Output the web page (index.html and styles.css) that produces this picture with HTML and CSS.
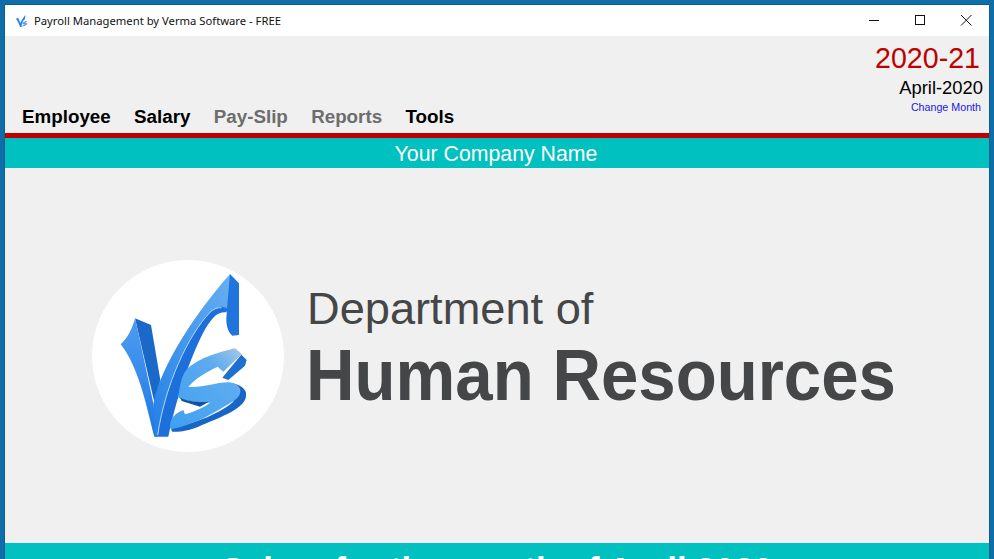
FILE: index.html
```html
<!DOCTYPE html>
<html lang="en">
<head>
<meta charset="utf-8">
<title>Payroll Management by Verma Software - FREE</title>
<link rel="stylesheet" href="styles.css">
</head>
<body>
<div class="window">
  <div class="titlebar">
    <svg class="app-icon" viewBox="0 0 14 14" aria-hidden="true">
      <path d="M1 5 L3 3.5 L5.5 9 C6.5 6 8.5 3 10.5 1 L10 5 C8 6.5 7 9 6.5 13 L5 13 C4 10 3 7 1 5 Z" fill="#2f7fe0"/>
      <path d="M7.5 9 C9 7.5 11 7 12.5 7 L10.5 8.7 L12.5 9.6 C11.5 11.5 9.5 12.5 7 12.5 L8 11 L10 10.2 L7.5 10 Z" fill="#5aa6f0"/>
    </svg>
    <span class="app-title">Payroll Management by Verma Software - FREE</span>
    <div class="win-controls">
      <svg class="win-btn" viewBox="0 0 46 31" aria-hidden="true"><path d="M18 15.5 H28" stroke="#111" fill="none"/></svg>
      <svg class="win-btn" viewBox="0 0 46 31" aria-hidden="true"><rect x="18.5" y="10.5" width="9" height="9" stroke="#111" fill="none"/></svg>
      <svg class="win-btn" viewBox="0 0 46 31" aria-hidden="true"><path d="M18 10 L28.5 20.5 M28.5 10 L18 20.5" stroke="#111" fill="none"/></svg>
    </div>
  </div>
  <header class="header">
    <nav class="menu">
      <span class="menu-item">Employee</span>
      <span class="menu-item">Salary</span>
      <span class="menu-item disabled">Pay-Slip</span>
      <span class="menu-item disabled">Reports</span>
      <span class="menu-item">Tools</span>
    </nav>
    <div class="period">
      <div class="year">2020-21</div>
      <div class="month">April-2020</div>
      <div class="change">Change Month</div>
    </div>
  </header>
  <div class="company">Your Company Name</div>
  <main class="main">
    <div class="hero">
      <svg class="logo" viewBox="21 15 576 576" role="img" aria-label="VS logo">
        <defs>
          <linearGradient id="face" x1="0" y1="0" x2="0" y2="1">
            <stop offset="0" stop-color="#4d9df0"/>
            <stop offset="1" stop-color="#1f78e4"/>
          </linearGradient>
          <linearGradient id="arm" x1="1" y1="0" x2="0" y2="1">
            <stop offset="0" stop-color="#66aff2"/>
            <stop offset=".6" stop-color="#3f93ea"/>
            <stop offset="1" stop-color="#2480e6"/>
          </linearGradient>
          <linearGradient id="sface" x1="1" y1="0" x2="0" y2="1">
            <stop offset="0" stop-color="#a9c7e6"/>
            <stop offset=".3" stop-color="#5cabf0"/>
            <stop offset="1" stop-color="#40a0f0"/>
          </linearGradient>
        </defs>
        <circle cx="309" cy="303" r="288" fill="#fff"/>
        <path d="M435 57 L462 85 L462 240 L442 242 C428 230 420 205 426 170 L395 156 Z" fill="#1f74dd"/>
        <path d="M150 190 L198 210 L226 375 L210 450 Z" fill="#1a68c8"/>
        <path d="M107 268 C128 250 142 220 150 190 L158 225 L205 445 L218 545 L208 545 C190 480 165 340 107 268 Z" fill="url(#face)"/>
        <path d="M205 450 C215 370 300 210 435 57 L426 160 C410 150 392 155 375 172 C310 240 240 390 218 545 L210 545 Z" fill="url(#arm)"/>
        <path d="M218 545 C240 390 310 240 375 172 C392 155 412 152 426 172 C400 168 385 185 368 210 C335 262 280 400 250 545 Z" fill="#1d70dc"/>
        <path d="M218 540 C240 390 310 240 375 172 C385 162 398 157 410 158" stroke="#a6d4fa" stroke-width="3" fill="none"/>
        <path d="M450 280 L485 315 L480 332 L430 375 L412 368 L468 300 Z" fill="#1f6fd0"/>
        <path d="M445 385 C475 395 488 405 482 430 C470 465 400 490 340 515 C310 527 280 532 262 530 L255 515 C330 510 410 470 445 440 Z" fill="#1765c4"/>
        <path d="M300 350 C330 312 400 292 450 280 L470 298 L415 350 L398 335 C365 350 330 372 310 395 C350 402 420 372 445 385 C478 398 470 425 440 442 C390 472 330 510 258 523 C250 500 262 478 295 465 L300 478 C330 470 360 455 375 443 C345 442 305 440 280 428 C282 400 290 365 300 350 Z" fill="url(#sface)"/>
        <path d="M285 428 C310 440 345 442 372 440 L345 455 L290 438 Z" fill="#12539f"/>
      </svg>
      <div class="hero-text">
        <div class="dept">Department of</div>
        <div class="hr">Human Resources</div>
      </div>
    </div>
  </main>
  <div class="salary-bar">Salary for the month of April 2020</div>
</div>
</body>
</html>
```
FILE: styles.css
```css
* { box-sizing: border-box; }
html, body { margin: 0; height: 100%; overflow: hidden; }
body {
  background: #0f6ea8;
  padding: 5px 5px 0;
  font-family: "Liberation Sans", Arial, sans-serif;
}
.window {
  height: 554px;
  display: flex;
  flex-direction: column;
  overflow: hidden;
  background: #f0f0f0;
  box-shadow: 0 0 0 1px #0d5f90;
}
.titlebar {
  flex: 0 0 31px;
  display: flex;
  align-items: center;
  background: #fff;
  padding-left: 10px;
}
.app-icon { width: 14px; height: 14px; margin-right: 5px; }
.app-title {
  font-family: "Noto Sans", sans-serif;
  font-size: 11.25px;
  color: #111;
}
.win-controls { margin-left: auto; display: flex; }
.win-btn { width: 46px; height: 31px; display: block; }
.header {
  flex: 0 0 97px;
  display: flex;
  justify-content: space-between;
  align-items: flex-end;
  padding: 0 6px 4px 17px;
}
.menu { display: flex; gap: 23.3px; }
.menu-item { font-size: 18.8px; font-weight: bold; color: #000; line-height: 24px; }
.menu-item.disabled { color: #6d6d6d; }
.period { text-align: right; padding-bottom: 14px; }
.year { font-size: 28.6px; line-height: 34px; color: #c00000; padding-right: 3px; }
.month { font-size: 18.4px; line-height: 25px; color: #000; }
.change { font-size: 10.7px; line-height: 15px; color: #1a1ae6; padding-right: 2px; }
.company {
  flex: 0 0 35px;
  background: #00c0c0;
  border-top: 5px solid #c00000;
  color: #fff;
  font-size: 21.3px;
  line-height: 26px;
  padding: 3px 2px 0 0;
  text-align: center;
}
.main {
  flex: 0 0 375px;
  padding: 92px 0 0 87px;
}
.hero { display: flex; align-items: flex-start; }
.logo { width: 192px; height: 192px; flex: none; }
.hero-text { margin-left: 22px; padding-top: 22px; color: #454648; }
.dept { font-size: 45.2px; line-height: 54px; margin-left: 1px; }
.hr {
  font-size: 67.2px;
  line-height: 80px;
  font-weight: bold;
  margin-top: -1px;
  transform: scaleY(1.07);
}
.salary-bar {
  flex: 1 0 40px;
  background: #00c0c0;
  color: #fff;
  font-size: 34.6px;
  font-weight: bold;
  line-height: 38px;
  padding: 8px 0 0;
  text-align: center;
}
```
